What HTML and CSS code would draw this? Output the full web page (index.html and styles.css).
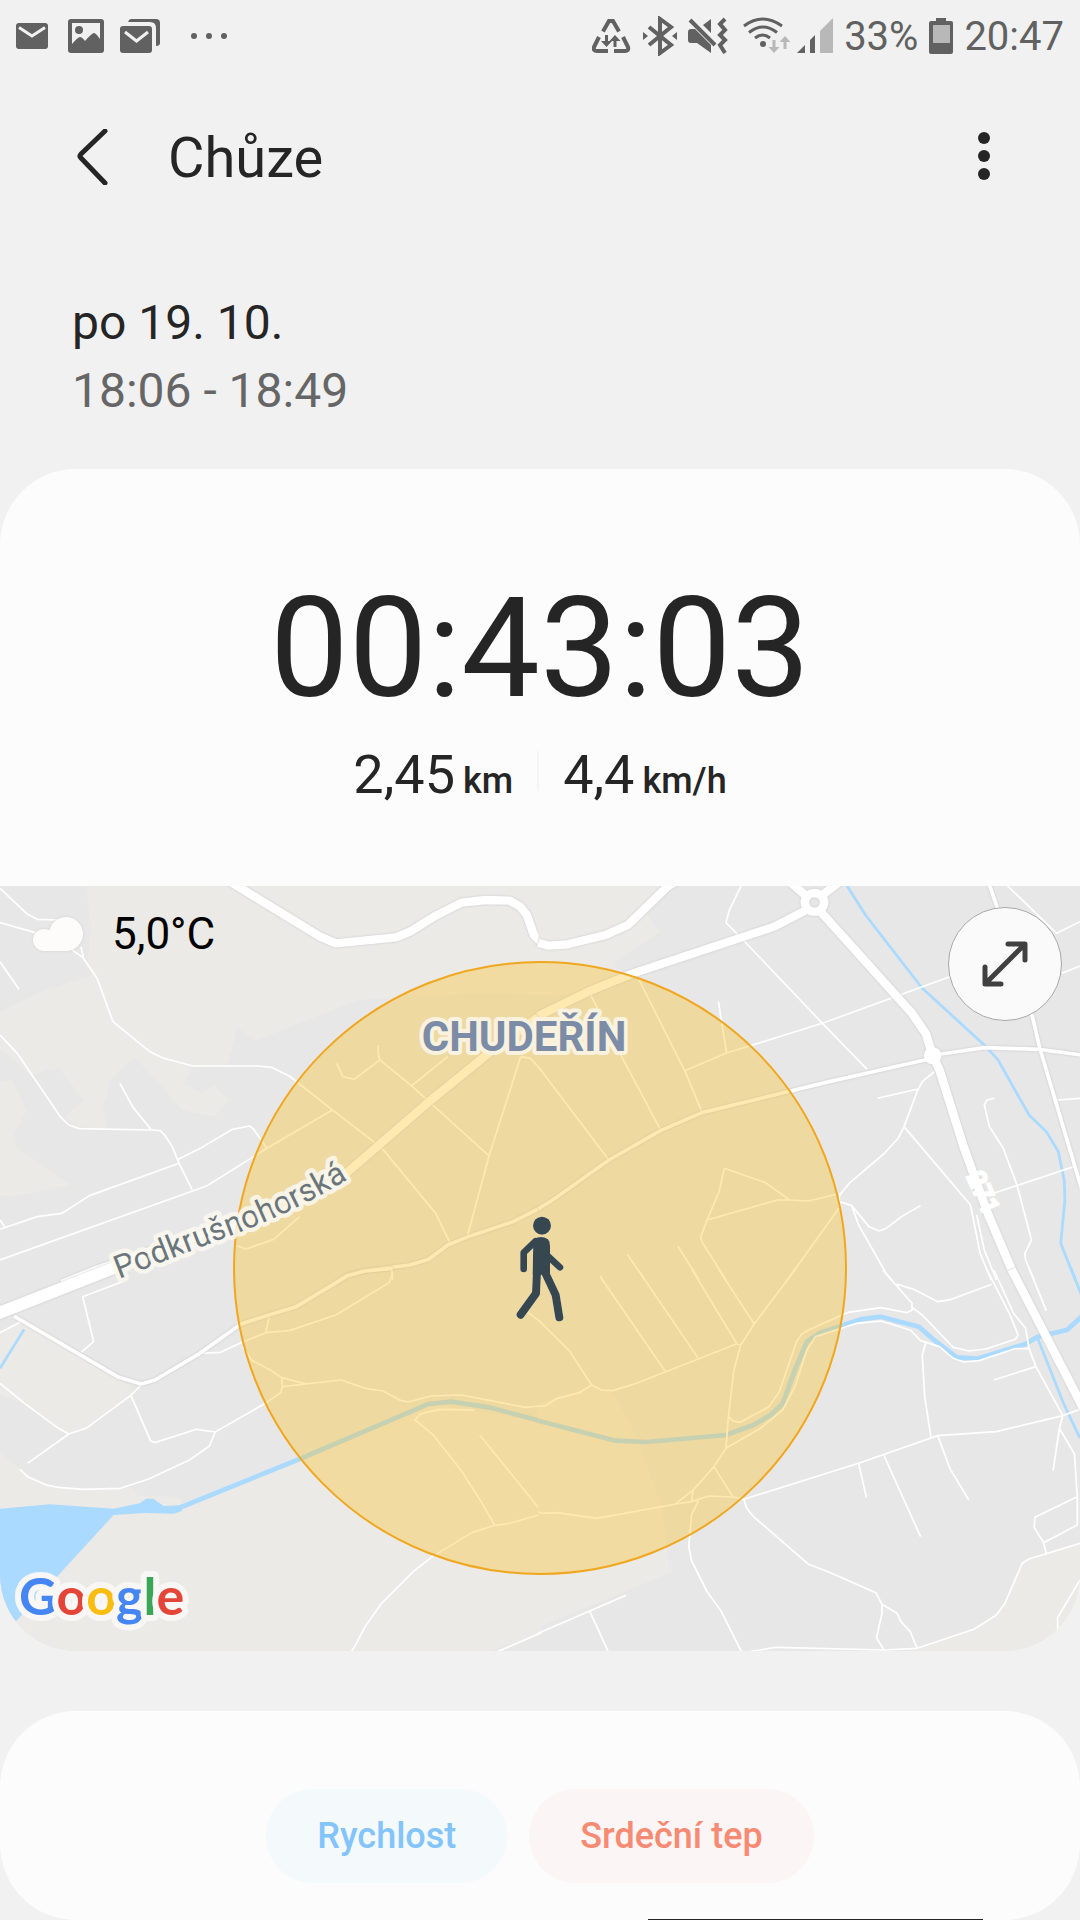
FILE: index.html
```html
<!DOCTYPE html>
<html lang="cs">
<head>
    <meta charset="UTF-8">
    <meta name="viewport" content="width=device-width, initial-scale=1.0">
    <title>Chůze</title>
    <link rel="stylesheet" href="styles.css">
</head>
<body>

    <!-- Status bar -->
    <div class="status-bar">
        <div class="status-left">
            <svg class="icon-mail" width="36" height="40" viewBox="0 0 36 40">
                <rect y="7" width="32" height="26" rx="3"/>
                <path class="cut" d="M3 11.500 16 20l13-8.500" stroke-width="3"/>
            </svg>
            <svg class="icon-image" width="36" height="40" viewBox="0 0 36 40">
                <rect y="3" width="36" height="34" rx="3"/>
                <path class="sky" d="M4 7h28v16q-4-6-6-6t-9 8q-3-4-5-4t-8 7z"/>
                <circle cx="11" cy="14" r="4"/>
            </svg>
            <svg class="icon-mails" width="40" height="40" viewBox="0 0 40 40">
                <path d="M8 6q1-3 3-3h25q4 0 4 4v20q0 3-4 3V12q0-6-6-6z"/>
                <rect y="10" width="32" height="27" rx="3"/>
                <path class="cut" d="M5 16l11.500 9L28 16" stroke-width="3"/>
            </svg>
            <svg class="icon-dots" width="52" height="40" viewBox="0 0 52 40">
                <circle cx="18" cy="20" r="3"/>
                <circle cx="33" cy="20" r="3"/>
                <circle cx="48" cy="20" r="3"/>
            </svg>
        </div>
        <div class="status-right">
            <svg width="40" height="40" viewBox="0 0 40 40">
                <path class="stroke" d="M11 15.500 17 5h4l6 10.500M7 21 2 31q-1 4 3 4h11M31 21l5 10q1 4-3 4H22" stroke-width="4"/>
                <path d="M13 19h3v6h4l-5.500 6L9 25h4zM21.500 31h3v-6h4L23 19l-5.500 6h4z"/>
            </svg>
            <svg width="34" height="40" viewBox="0 0 34 40">
                <path class="stroke" d="M6 11l22 18-11 8V3l11 8L6 29" stroke-width="4"/>
                <path d="M0 16l5 4-5 4zM34 16l-5 4 5 4z"/>
            </svg>
            <svg class="icon-mute" width="40" height="40" viewBox="0 0 40 40">
                <path d="M0 16q0-3 3-3h4l16 16v8L9 27H3q-3 0-3-3zM23 3v14l-8-8z"/>
                <path class="stroke" d="M2 4l25 25M37 3l-5 5 5 6-5 5 5 5-5 5 5 8" stroke-width="4"/>
            </svg>
            <svg class="icon-wifi" width="47" height="40" viewBox="0 0 47 40">
                <path class="stroke" d="M1 10q18.500-14 38 0M6 16.500q14-11 28 0M12 22q7.500-6 15 0" stroke-width="3"/>
                <circle cx="20" cy="28" r="3"/>
                <path class="pale" d="M29.500 24h3v7h4L31 37l-5.500-6h4zM40.500 33h3v-7h4L42 20l-5.500 6h4z"/>
            </svg>
            <svg class="icon-signal" width="36" height="40" viewBox="0 0 36 40">
                <path d="M0 37l8-8v8zM13 24l5-5v18h-5z"/>
                <path class="pale" d="M23 15 36 2v35H23z"/>
            </svg>
            <span class="battery-text">33%</span>
            <svg class="icon-battery" width="24" height="40" viewBox="0 0 24 40">
                <path d="M7 2h10v3h5q2 0 2 2v29q0 2-2 2H2q-2 0-2-2V7q0-2 2-2h5z"/>
                <path class="pale" d="M4 9h17v18H4z"/>
            </svg>
            <span class="clock">20:47</span>
        </div>
    </div>

    <!-- Toolbar -->
    <header class="toolbar">
        <button type="button" class="icon-btn" aria-label="Zpět">
            <svg width="56" height="56" viewBox="0 0 56 56">
                <path class="line" d="M41 2 17 25q-2 2 0 4l24 25" stroke-width="5"/>
            </svg>
        </button>
        <h1>Chůze</h1>
        <button type="button" class="icon-btn" aria-label="Další možnosti">
            <svg width="56" height="56" viewBox="0 0 56 56">
                <circle cx="28" cy="9" r="6"/>
                <circle cx="28" cy="27" r="6"/>
                <circle cx="28" cy="45" r="6"/>
            </svg>
        </button>
    </header>

    <div class="when">
        <p>po 19. 10.</p>
        <p class="hours">18:06 - 18:49</p>
    </div>

    <!-- Workout summary with map -->
    <main class="card">
        <div class="duration">00:43:03</div>
        <div class="stats">
            <div class="stat"><span>2,45</span><span class="unit">km</span></div>
            <div class="divider"></div>
            <div class="stat"><span>4,4</span><span class="unit">km/h</span></div>
        </div>

        <div class="map">
            <svg class="map-canvas" viewBox="0 0 1080 765" role="img" aria-label="Mapa">
                <rect class="ground" width="1080" height="765"/>

                <!-- north west tile -->
                <g transform="translate(0 -6) scale(.3444 .3333)">
                    <path class="park" d="M250 0 262 150 255 245 265 288 110 338 0 395V505L90 585 170 562 243 660 190 710 225 742 310 745 300 680 320 600 392 530 530 690 620 710 663 660 620 615 585 640 535 612 558 560 660 555 690 445 745 480 1040 360 1400 340 1572 345V0z"/>
                    <path class="park" d="M0 605 35 600 78 690 42 760 50 805 205 915 35 950 0 945z"/>
                    <path class="minor" d="M0 25 80 103 108 118 170 120M0 128 110 160M210 210 240 232 282 295 328 425 435 515 475 535 560 558H750L788 562 840 588 965 690 1095 793 1115 812 1265 1000 1308 1092M235 200 242 232M0 245 55 328M0 465 50 520 175 710 200 735 230 746 440 750 465 752 478 765 500 800 520 850 558 930M348 610 385 680 438 748M0 1048 108 1010 180 1000 260 947 520 850M518 838 590 800 675 748 725 738 738 750 775 805M0 1140 600 918 775 805 965 690M0 1020 15 1042M978 550 995 590 1028 598 1103 540 1098 520V495M1103 540 1195 618 1240 660 1420 828M1195 618 1300 530M1512 530 1420 828 1358 1065M1512 530 1540 535 1572 570M690 1098 715 1107 795 1078 870 1010M1137 1172 1140 1200"/>
                    <g class="roads">
                        <path class="mid" d="M1572 982 1490 1025 1360 1070 1300 1095 1245 1138 1190 1155 1060 1172 1010 1185 980 1202"/>
                        <path class="main" d="M660 0 930 170 975 190 1150 172 1190 155 1260 110 1340 68 1410 60 1480 62 1510 80 1530 105 1550 165 1575 190M180 1212 280 1170 500 1090 800 1010 1000 885 1240 670 1430 510 1575 402"/>
                    </g>
                </g>

                <!-- north east tile -->
                <g transform="translate(540 -6) scale(.3444 .3333)">
                    <path class="park" d="M-5 0H400L310 100 348 155 218 245 225 290 120 345H-5z"/>
                    <path class="river-thin" d="M892 18 945 105 1110 325 1290 495 1330 540 1420 705 1470 755 1505 815 1522 900 1524 960 1512 1090 1555 1202"/>
                    <path class="minor" d="M-5 560 200 840M145 340 232 520 350 750M288 300 420 572 470 695M518 365 542 520M420 572 540 520 820 430 1190 290M585 15 550 90 540 128 590 180 820 430 950 568M1355 15 1500 160 1568 125M1515 280 1568 258M1500 660 1568 655M1145 575 1110 605 1095 635 1057 740 1040 775 1000 820 900 908 870 945M980 655 1098 627M1057 740 1250 975M1320 655 1298 660 1290 675 1305 740 1345 805 1385 915 1427 1080 1408 1120 1410 1140 1435 1200M1310 942 1550 860M535 865 520 935 485 1020 467 1070 470 1085 540 1200M535 865 655 908 725 960 780 963 860 943M485 1020 690 960 725 960M868 985 870 965 905 977 955 1040 985 1053 1005 1045 1050 1010 1105 977M905 977 925 1035 1005 1180 1025 1205M868 985 718 1200M400 1098 462 1200M253 1123 305 1200M175 1188 182 1200M1250 975 1278 1120 1310 1200M1268 1005 1290 1110 1325 1200M870 940 868 985"/>
                    <g class="roads">
                        <path class="mid" d="M1300 0 1350 150 1430 410 1450 500 1572 925M1165 522 1290 503 1450 508 1572 525M1140 535 840 605 470 698 350 752 200 840 30 965-5 986"/>
                        <path class="main" d="M-5 188 25 197 80 193 190 165 255 135 370 20 400 0M-5 408 140 335 270 280 680 140 770 92M725 5 775 50M870 5 820 45M815 95 1080 400 1120 460 1140 525 1160 570 1230 800 1300 1000 1370 1170"/>
                        <circle class="main" cx="797" cy="67" r="28"/>
                        <circle class="node" cx="1140" cy="527" r="26"/>
                    </g>
                </g>

                <!-- south west tile -->
                <g transform="translate(0 384) scale(.3444 .3333)">
                    <path class="park" d="M0 190 60 155 345 322 375 345 385 372 250 475 200 490 75 403 0 375z"/>
                    <path class="park" d="M0 550 58 598 135 645 240 658 350 655 385 650 398 677 520 680 528 700 870 567 1250 400 1572 455V1088L1420 1145H0z"/>
                    <path class="water" d="M0 716 145 703 330 716 405 700 425 686H445L475 708 520 706 530 722 505 731 420 729 330 735 170 915 45 1055 0 1055z"/>
                    <path class="river" d="M505 720 870 567 1245 402 1310 395 1420 412 1572 454"/>
                    <path class="river-thin" d="M70 178 0 295"/>
                    <path class="minor" d="M355 35 240 80 272 215 235 247M0 188 60 155M0 340 75 403 170 475 200 492M410 345 380 376 250 475 200 492 80 580M380 376 437 512 450 518 570 478 625 486 770 400 815 368 820 350 818 323 790 303 730 270 705 230M625 486 608 528 550 570 430 628 350 655 240 658 170 652 135 645 80 620 58 598M580 250 640 247 700 218 772 188 840 182 975 135 1130 38 1140 10 1137 0M783 133 772 188M818 323 890 342M820 350 990 330 1060 355 1112 363 1165 392 1185 396 1252 378 1340 375 1525 412 1572 408M1378 420 1275 418 1220 432 1205 450 1258 495 1338 600 1400 700 1437 766M1393 495 1572 724M1572 733 1480 760 1437 766 1370 788 1255 860 1200 905 1108 1000 1060 1070 1030 1130 1020 1145M1445 1145 1572 1088M1530 125 1572 158"/>
                    <g class="roads">
                        <path class="mid" d="M1140-5 1060 3 1010 17 860 110 780 135 700 162 580 250 450 330 410 342 345 322 40 138"/>
                        <path class="main wide" d="M-20 136 340-10"/>
                    </g>
                </g>

                <!-- south east tile -->
                <g transform="translate(540 384) scale(.3444 .3333)">
                    <path class="park" d="M-5 400 150 350 215 370 280 497 355 715 370 850 385 905-5 1072z"/>
                    <path class="park" d="M1568 820 1475 850 1400 880 1350 1000 1325 1035 1260 1078 1100 1135V1145H1568z"/>
                    <path class="river" d="M-5 452 220 512 310 516 540 495 620 465 670 435 705 400 740 300 775 215 810 190 930 148 990 140 1100 170 1150 215 1210 262 1270 266 1410 222 1445 200 1530 180 1572 140"/>
                    <path class="river-thin" d="M1445 205 1520 400 1568 505M1540-10 1572 75"/>
                    <path class="minor" d="M-5 150 85 242 150 345 178 360 210 362 275 342 570 222 583 225M-5 408H15L50 385 115 368 150 345M175 20 363 303M285 0 458 263M442 0 572 222M520 0 622 162M740 0 622 162 583 225 563 300 547 440 540 535 505 590 445 660 395 700M547 440 560 453 582 457 665 410 695 365 745 215 760 192 780 180 895 127 990 113 1065 128 1080 120V100L995 0M540 535 640 475 705 420 740 350 775 240 800 200 920 160 990 153 1075 180 1105 212 1160 230 1200 265 1230 276 1275 272 1380 236H1420M1035 42 1085 58 1155 95 1195 88 1312 43M1080 112 1110 135 1200 232 1245 243 1295 237 1380 208 1388 195 1365 135 1298 0M1318 0 1375 130 1410 175 1420 236 1440 290 1518 437 1508 475 1552 552 1560 680V765L1465 817M1422 0 1470 122M1317 330 1440 290M1120 218 1110 255 1117 380 1135 500M592 688 925 580 1155 497 1325 485 1518 437 1568 418M925 580 948 683M998 555 1105 800M1155 497 1190 595 1245 690M1508 475 1490 602M1560 680 1437 742 1435 772 1462 817 1470 850M-5 725 5 730 50 728 165 745 395 702 440 695 490 678 560 681 592 688M445 660 440 695M505 590 560 680M460 692 440 735 432 830 440 872 485 965 525 1022 585 1145M592 688 600 715 620 740 780 883 840 907 975 968 993 1003 1037 1030 1048 1055 1075 1085 1095 1135M993 1003V1030L977 1103 1000 1142M610 1145 685 1132 1000 1140 1095 1135 1260 1078 1325 1035 1350 1000 1400 880 1420 867 1568 820M-5 1090 250 976M145 1025 198 1145M1568 930 1503 1043V1080"/>
                    <g class="roads">
                        <path class="main" d="M1369-2 1576 412"/>
                    </g>
                </g>

                <circle class="area" cx="540" cy="382" r="306"/>

                <!-- map labels -->
                <path id="street" fill="none" d="M119 393 224 352Q300 325 366 282"/>
                <text class="label-street"><textPath href="#street">Podkrušnohorská</textPath></text>
                <text class="label-town" x="524" y="165">CHUDEŘÍN</text>
                <text class="label-road" transform="translate(966 290) rotate(66)">271</text>

                <!-- walking person -->
                <g class="walker" transform="translate(500 314) scale(.3333)">
                    <circle cx="126" cy="77" r="27"/>
                    <path d="M100 118q24-14 44 0 6 6 6 20v86H98z"/>
                    <path class="limb" d="M106 124 71 158V207M140 165 180 202" stroke-width="20"/>
                    <path class="limb" d="M111 215 108 280 62 344M134 215 167 285 178 352" stroke-width="24"/>
                </g>

                <text class="google" x="19" y="729"><tspan class="blue">G</tspan><tspan class="red">o</tspan><tspan class="yellow">o</tspan><tspan class="blue">g</tspan><tspan class="green">l</tspan><tspan class="red">e</tspan></text>
            </svg>

            <div class="weather">
                <svg width="52" height="36" viewBox="0 0 52 36">
                    <circle cx="12" cy="24" r="11"/>
                    <circle cx="34" cy="18" r="17"/>
                    <rect x="12" y="19" width="22" height="16"/>
                </svg>
                <span>5,0°C</span>
            </div>

            <button type="button" class="expand-btn" aria-label="Zvětšit mapu">
                <svg width="56" height="56" viewBox="0 0 56 56">
                    <path class="line" d="M9 47 47 9M31 8H48V24M8 31V48H24" stroke-width="5"/>
                </svg>
            </button>
        </div>
    </main>

    <!-- Chart toggles -->
    <section class="card chart-card">
        <button type="button" class="chip speed">Rychlost</button>
        <button type="button" class="chip heart">Srdeční tep</button>
        <div class="chart-edge"></div>
    </section>

</body>
</html>
```
FILE: styles.css
```css
* {
  margin: 0;
  padding: 0;
  box-sizing: border-box;
}

body {
  background-color: #f1f1f1;
  color: #252525;
  font-family: Roboto, "Liberation Sans", sans-serif;
  min-height: 100vh;
}

svg {
  display: block;
  flex-shrink: 0;
}

button {
  border: none;
  background: none;
  font-family: inherit;
  cursor: pointer;
}

/* Status bar */
.status-bar {
  display: flex;
  justify-content: space-between;
  align-items: center;
  height: 72px;
  padding: 0 16px;
  color: #616161;
  font-size: 40px;
}

.status-bar svg {
  fill: #616161;
}

.status-left,
.status-right {
  display: flex;
  align-items: center;
  gap: 16px;
}

.status-right {
  gap: 11px;
}

.status-bar .cut,
.status-bar .stroke {
  fill: none;
  stroke: #616161;
}

.status-bar .cut {
  stroke: #f1f1f1;
}

.status-bar .sky {
  fill: #f1f1f1;
}

.status-bar .pale {
  fill: #b8b8b8;
}

.icon-wifi {
  margin-left: 4px;
}

.icon-signal {
  margin-left: -4px;
}

/* Toolbar */
.toolbar {
  display: flex;
  align-items: center;
  gap: 48px;
  height: 170px;
  padding: 0 68px 0 64px;
}

.toolbar h1 {
  flex: 1;
  padding-top: 2px;
  font-size: 56px;
  font-weight: 400;
}

.icon-btn svg {
  fill: #252525;
}

.line {
  fill: none;
  stroke: #252525;
  stroke-linecap: round;
  stroke-linejoin: round;
}

.when {
  padding: 47px 72px 44px;
  font-size: 48px;
  line-height: 68px;
}

.hours {
  color: #666;
}

/* Cards */
.card {
  background-color: #fcfcfc;
  border-radius: 76px;
  overflow: hidden;
}

.duration {
  padding-top: 97px;
  font-size: 140px;
  line-height: 164px;
  text-align: center;
}

.stats {
  display: flex;
  justify-content: center;
  gap: 24px;
  height: 156px;
  padding-top: 13px;
}

.stat {
  display: flex;
  align-items: baseline;
  gap: 8px;
  font-size: 54px;
  line-height: 64px;
}

.unit {
  font-size: 36px;
  font-weight: 500;
}

.divider {
  width: 2px;
  height: 40px;
  margin-top: 8px;
  background-color: #f5f5f5;
}

/* Map */
.map {
  position: relative;
}

.map-canvas {
  width: 100%;
  height: auto;
}

.ground {
  fill: #e7e7e7;
}

.park {
  fill: #ebeae6;
}

.water {
  fill: #aadaff;
}

.river,
.river-thin,
.minor,
.mid,
.main {
  fill: none;
  stroke: #fff;
  stroke-width: 5;
  stroke-linejoin: round;
}

.river,
.river-thin {
  stroke: #aadaff;
  stroke-width: 14;
}

.river-thin {
  stroke-width: 8;
}

.mid {
  stroke-width: 11;
}

.main {
  stroke-width: 25;
}

.wide {
  stroke-width: 36;
}

.node {
  fill: #fff;
}

.roads {
  filter: drop-shadow(0 0 3px #c4c6cc);
}

.area {
  fill: rgba(251, 191, 31, 0.35);
  stroke: #f0a71f;
  stroke-width: 2;
}

.label-street,
.label-town,
.label-road,
.google {
  paint-order: stroke;
  stroke-linejoin: round;
}

.label-street {
  font-size: 32px;
  fill: #6a767b;
  stroke: rgba(250, 248, 240, 0.85);
  stroke-width: 9;
}

.label-town {
  font-size: 42px;
  font-weight: 700;
  text-anchor: middle;
  fill: #7c8ca6;
  stroke: #f8f2df;
  stroke-width: 8;
}

.label-road {
  font-size: 26px;
  font-weight: 500;
  fill: #fff;
  stroke: #fff;
  stroke-width: 2;
}

.walker {
  fill: #37474f;
  filter: drop-shadow(0 0 2px #fff);
}

.limb {
  fill: none;
  stroke: #37474f;
  stroke-linecap: round;
  stroke-linejoin: round;
}

.google {
  font-family: Lato, sans-serif;
  font-size: 52px;
  font-weight: 700;
  stroke: #f8f7f5;
  stroke-width: 12;
}

.blue {
  fill: #4586f2;
}

.red {
  fill: #e34538;
}

.yellow {
  fill: #f8bd10;
}

.green {
  fill: #3ba657;
}

.weather {
  position: absolute;
  top: 20px;
  left: 32px;
  display: flex;
  align-items: center;
  gap: 28px;
  height: 56px;
  color: #000;
  font-size: 44px;
}

.weather svg {
  fill: #fdfcfa;
  filter: drop-shadow(0 0 1px #ccc);
}

.expand-btn {
  position: absolute;
  top: 21px;
  right: 18px;
  display: flex;
  align-items: center;
  justify-content: center;
  width: 114px;
  height: 114px;
  border: 1px solid #a8a8a8;
  border-radius: 50%;
  background-color: #fafafa;
}

.expand-btn .line {
  stroke: #404040;
}

/* Chart toggles */
.chart-card {
  position: relative;
  display: flex;
  justify-content: center;
  gap: 22px;
  margin-top: 60px;
  padding: 78px 0 37px;
}

.chip {
  height: 94px;
  padding: 0 51px;
  border-radius: 47px;
  font-size: 36px;
  font-weight: 500;
}

.speed {
  background-color: #f4f9fc;
  color: #82c4fb;
}

.heart {
  background-color: #fbf5f5;
  color: #f78a73;
}

/* top edge of the chart under the toggles */
.chart-edge {
  position: absolute;
  bottom: 0;
  left: 60%;
  width: 31%;
  height: 1px;
  background-color: #252525;
}
```
